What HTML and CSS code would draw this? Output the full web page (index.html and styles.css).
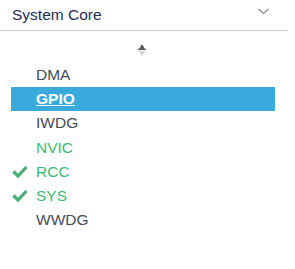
FILE: index.html
```html
<!DOCTYPE html>
<html lang="en">
<head>
  <meta charset="UTF-8">
  <title>System Core</title>
  <link rel="stylesheet" href="styles.css">
</head>
<body>
  <div class="panel">
    <div class="group-head">
      <span class="group-title">System Core</span>
      <svg class="chevron" width="11" height="7" viewBox="0 0 11 7">
        <path d="M0.5 1 L5.5 5.5 L10.5 1" fill="none" stroke="#8a8a8a" stroke-width="1.3"/>
      </svg>
    </div>
    <div class="sorter">
      <svg width="10" height="12" viewBox="0 0 10 12">
        <path d="M1 6 L1 4.5 L3 4.5 L3 2.5 L4 2.5 L4 1 L6 1 L6 2.5 L7 2.5 L7 4.5 L9 4.5 L9 6 Z" fill="#5a5a5a"/>
        <path d="M1 7 L9 7 L9 8 L7 8 L7 10 L6 10 L6 11.5 L4 11.5 L4 10 L3 10 L3 8 L1 8 Z" fill="#d8d8d8"/>
      </svg>
    </div>
    <ul class="ip-list">
      <li class="ip">DMA</li>
      <li class="ip selected">GPIO</li>
      <li class="ip">IWDG</li>
      <li class="ip ok">NVIC</li>
      <li class="ip ok"><svg class="check" width="16" height="13" viewBox="0 0 16 13"><path d="M1.5 6.5 L6 11 L14.5 2" fill="none" stroke="#47ad74" stroke-width="3.2"/></svg>RCC</li>
      <li class="ip ok"><svg class="check" width="16" height="13" viewBox="0 0 16 13"><path d="M1.5 6.5 L6 11 L14.5 2" fill="none" stroke="#47ad74" stroke-width="3.2"/></svg>SYS</li>
      <li class="ip">WWDG</li>
    </ul>
  </div>
</body>
</html>
```

FILE: styles.css
```css
body {
  margin: 0;
  background: #fff;
  font-family: "Liberation Sans", Arial, sans-serif;
}
.panel {
  width: 288px;
}
.group-head {
  display: flex;
  align-items: center;
  justify-content: space-between;
  height: 30px;
  padding: 0 19px 0 12px;
  border-bottom: 1px solid #c3cfe4;
}
.group-title {
  color: #1f2b5a;
  font-size: 15.5px;
  margin-top: -1px;
}
.chevron {
  margin-top: -7px;
}
.sorter {
  display: flex;
  justify-content: center;
  padding: 13px 0 0 0;
  margin-right: 4px;
  height: 19px;
}
.ip-list {
  list-style: none;
  margin: 0 0 0 11px;
  padding: 0;
  width: 264px;
}
.ip {
  position: relative;
  height: 24.2px;
  line-height: 24.2px;
  padding-left: 25px;
  font-size: 15.5px;
  color: #454b5a;
}
.ip.selected {
  background: #3aa9dc;
  color: #fff;
  font-weight: bold;
  text-decoration: underline;
}
.ip.ok {
  color: #3dba72;
}
.check {
  position: absolute;
  left: 1px;
  top: 5px;
}
```
